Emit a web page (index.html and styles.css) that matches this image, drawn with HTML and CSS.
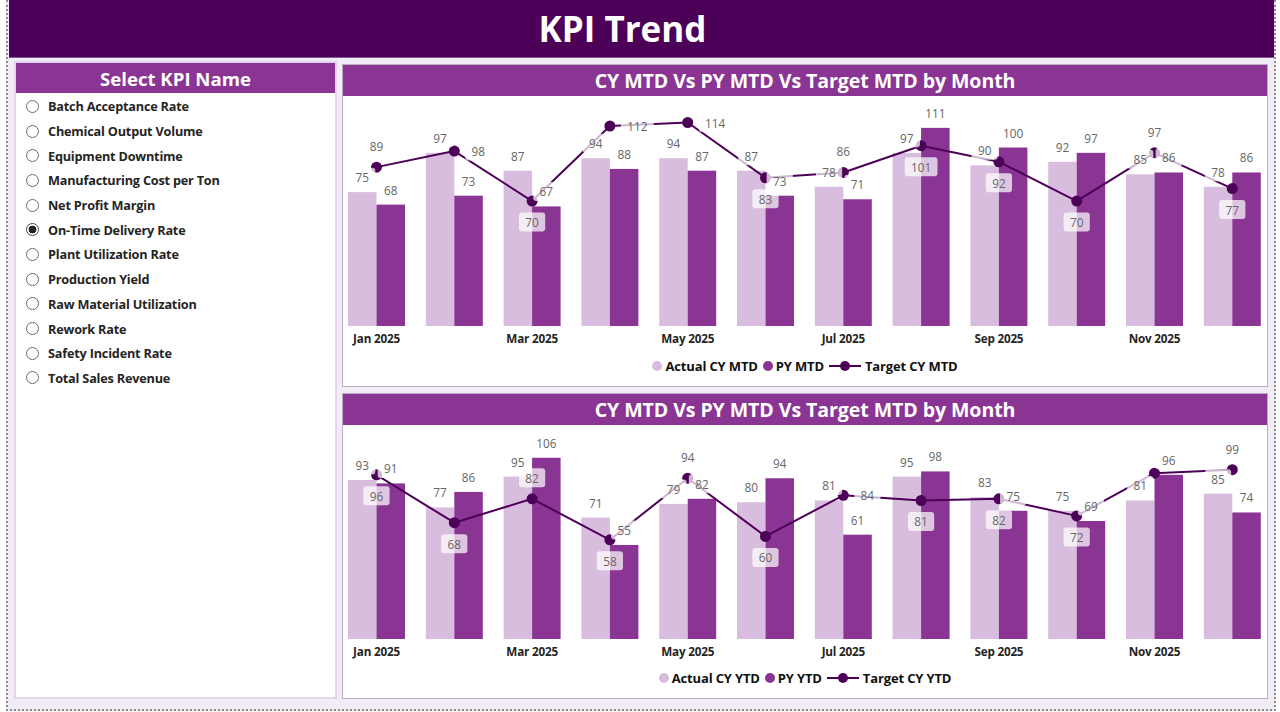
FILE: index.html
```html
<!DOCTYPE html>
<html lang="en">
<head>
<meta charset="utf-8">
<title>KPI Trend</title>
<link rel="stylesheet" href="styles.css">
</head>
<body>
<div class="frame">
  <header class="top"><h1 class="title">KPI Trend</h1></header>
  <div class="content">
    <aside class="panel">
      <div class="panel-head">Select KPI Name</div>
      <ul class="kpi-list">
        <li class="kpi"><span class="radio"></span>Batch Acceptance Rate</li>
        <li class="kpi"><span class="radio"></span>Chemical Output Volume</li>
        <li class="kpi"><span class="radio"></span>Equipment Downtime</li>
        <li class="kpi"><span class="radio"></span>Manufacturing Cost per Ton</li>
        <li class="kpi"><span class="radio"></span>Net Profit Margin</li>
        <li class="kpi"><span class="radio radio-on"></span>On-Time Delivery Rate</li>
        <li class="kpi"><span class="radio"></span>Plant Utilization Rate</li>
        <li class="kpi"><span class="radio"></span>Production Yield</li>
        <li class="kpi"><span class="radio"></span>Raw Material Utilization</li>
        <li class="kpi"><span class="radio"></span>Rework Rate</li>
        <li class="kpi"><span class="radio"></span>Safety Incident Rate</li>
        <li class="kpi"><span class="radio"></span>Total Sales Revenue</li>
      </ul>
    </aside>
    <main class="charts">
      <section class="card card-mtd">
        <div class="card-head">CY MTD Vs PY MTD Vs Target MTD by Month</div>
        <div class="card-body">
          <svg class="plot" data-chart="c1" xmlns="http://www.w3.org/2000/svg"></svg>
          <div class="legend">
            <span class="lg-item"><span class="dot dot-light"></span>Actual CY MTD</span>
            <span class="lg-item"><span class="dot dot-dark"></span>PY MTD</span>
            <span class="lg-item"><svg class="lg-line" width="32" height="12" viewBox="0 0 32 12"><line x1="0" y1="6" x2="32" y2="6" stroke="#4d0057" stroke-width="2"/><circle cx="16" cy="6" r="5" fill="#4d0057"/></svg>Target CY MTD</span>
          </div>
        </div>
      </section>
      <section class="card card-ytd">
        <div class="card-head">CY MTD Vs PY MTD Vs Target MTD by Month</div>
        <div class="card-body">
          <svg class="plot" data-chart="c2" xmlns="http://www.w3.org/2000/svg"></svg>
          <div class="legend">
            <span class="lg-item"><span class="dot dot-light"></span>Actual CY YTD</span>
            <span class="lg-item"><span class="dot dot-dark"></span>PY YTD</span>
            <span class="lg-item"><svg class="lg-line" width="32" height="12" viewBox="0 0 32 12"><line x1="0" y1="6" x2="32" y2="6" stroke="#4d0057" stroke-width="2"/><circle cx="16" cy="6" r="5" fill="#4d0057"/></svg>Target CY YTD</span>
          </div>
        </div>
      </section>
    </main>
  </div>
</div>
<script src="app.js"></script>
</body>
</html>
```

FILE: styles.css
```css
* { box-sizing: border-box; }
html, body { margin: 0; padding: 0; }
body {
  background: #ffffff;
  font-family: "Open Sans", "Noto Sans", sans-serif;
  color: #252423;
}
.frame {
  width: 1270px;
  height: 711px;
  margin-left: 6px;
  border: 2px dotted #8c8c8c;
  border-top: none;
  background: #f2ecf6;
  display: flex;
  flex-direction: column;
}
.top {
  height: 58px;
  margin-left: 1px;
  background: #4d0057;
  border-bottom: 1px solid #7b5d97;
  display: flex;
  align-items: center;
  justify-content: center;
  padding-right: 38px;
}
.title {
  margin: 0;
  color: #ffffff;
  font-size: 35px;
  font-weight: 700;
  line-height: 1;
}
.content {
  flex: 1;
  display: flex;
  gap: 5px;
  padding: 3px 6px 10px 6px;
}
.panel {
  width: 323px;
  background: #ffffff;
  border: 2px solid #e4d3ed;
  display: flex;
  flex-direction: column;
}
.panel-head {
  height: 30px;
  background: #8a3493;
  color: #ffffff;
  font-size: 18.6px;
  font-weight: 700;
  display: flex;
  align-items: center;
  justify-content: center;
}
.kpi-list {
  list-style: none;
  margin: 0;
  padding: 1px 0 0 10px;
}
.kpi {
  height: 24.7px;
  display: flex;
  align-items: center;
  gap: 9px;
  font-size: 12.7px;
  font-weight: 700;
  color: #252423;
  letter-spacing: -0.2px;
}
.radio {
  width: 13px;
  height: 13px;
  border-radius: 50%;
  border: 1px solid #6b6b6b;
  background: #ffffff;
  flex: none;
}
.radio-on {
  border-color: #444444;
  background: radial-gradient(circle, #252423 0 3.6px, #ffffff 4.2px);
}
.charts {
  width: 926px;
  display: flex;
  flex-direction: column;
  gap: 6px;
  padding-top: 3px;
}
.card {
  background: #ffffff;
  border: 1px solid #bcaac7;
  display: flex;
  flex-direction: column;
}
.card-mtd { height: 323px; }
.card-ytd { flex: 1; }
.card-head {
  height: 31px;
  flex: none;
  background: #8a3493;
  color: #ffffff;
  font-size: 19.6px;
  font-weight: 700;
  display: flex;
  align-items: center;
  justify-content: center;
  letter-spacing: -0.1px;
}
.card-body {
  flex: 1;
  display: flex;
  flex-direction: column;
}
.plot {
  flex: 1;
  width: 100%;
  display: block;
}
.legend {
  height: 28px;
  margin-bottom: 6px;
  flex: none;
  display: flex;
  align-items: center;
  justify-content: center;
  gap: 5px;
  font-size: 13px;
  font-weight: 700;
  color: #111111;
  letter-spacing: -0.15px;
}
.lg-item {
  display: flex;
  align-items: center;
  gap: 3px;
}
.dot {
  width: 10px;
  height: 10px;
  border-radius: 50%;
  display: inline-block;
}
.dot-light { background: #d9bddf; }
.dot-dark { background: #8a3493; }
.lg-line { display: block; margin-right: 1px; }

.bar-light { fill: #d9bddf; }
.bar-dark { fill: #8a3493; }
.tline { fill: none; stroke: #4d0057; stroke-width: 2; stroke-linejoin: round; }
.tdot { fill: #4d0057; }
.lbl-bg { fill: #ffffff; opacity: 0.72; }
.lbl {
  font-family: "Open Sans", "Noto Sans", sans-serif;
  font-size: 11.8px;
  fill: #666666;
  text-anchor: middle;
  dominant-baseline: central;
}
.axis {
  font-family: "Open Sans", "Noto Sans", sans-serif;
  font-size: 11.7px;
  font-weight: 700;
  fill: #252423;
  text-anchor: middle;
  dominant-baseline: central;
  letter-spacing: -0.2px;
}
```

FILE: app.js
```js
(function () {
  var NS = 'http://www.w3.org/2000/svg';
  var months = ['Jan 2025', 'Feb 2025', 'Mar 2025', 'Apr 2025', 'May 2025', 'Jun 2025',
    'Jul 2025', 'Aug 2025', 'Sep 2025', 'Oct 2025', 'Nov 2025', 'Dec 2025'];
  var data = {
    c1: {
      base: 326, k: 1.785, axisY: 338,
      light: [75, 97, 87, 94, 94, 87, 78, 97, 90, 92, 85, 78],
      dark: [68, 73, 67, 88, 87, 73, 71, 111, 100, 97, 86, 86],
      target: [89, 98, 70, 112, 114, 83, 86, 101, 92, 70, 97, 77],
      pos: ['a', 'r', 'b', 'r', 'r', 'b', 'a', 'b', 'b', 'b', 'a', 'b']
    },
    c2: {
      base: 639, k: 1.71, axisY: 651,
      light: [93, 77, 95, 71, 79, 80, 81, 95, 83, 75, 81, 85],
      dark: [91, 86, 106, 55, 82, 94, 61, 98, 75, 69, 96, 74],
      target: [96, 68, 82, 58, 94, 60, 84, 81, 82, 72, 97, 99],
      pos: ['b', 'b', 'a', 'b', 'a', 'b', 'r', 'b', 'b', 'b', 'n', 'a']
    }
  };
  function el(tag, attrs, parent) {
    var e = document.createElementNS(NS, tag);
    for (var k in attrs) e.setAttribute(k, attrs[k]);
    parent.appendChild(e);
    return e;
  }
  function label(g, x, y, txt) {
    var w = txt.length * 6.6 + 13;
    el('rect', { x: x - w / 2, y: y - 9.5, width: w, height: 19, rx: 3, 'class': 'lbl-bg' }, g);
    var t = el('text', { x: x, y: y, 'class': 'lbl' }, g);
    t.textContent = txt;
  }
  var svgs = document.querySelectorAll('svg.plot');
  for (var s = 0; s < svgs.length; s++) {
    var svg = svgs[s];
    var d = data[svg.getAttribute('data-chart')];
    var r = svg.getBoundingClientRect();
    svg.setAttribute('viewBox', r.left + ' ' + r.top + ' ' + r.width + ' ' + r.height);
    var X0 = 348, P = 77.8, BW = 28.5;
    var yv = (function (dd) { return function (v) { return dd.base - v * dd.k; }; })(d);
    var gBars = el('g', {}, svg);
    var gLine = el('g', {}, svg);
    var gLbl = el('g', {}, svg);
    var pts = [];
    for (var i = 0; i < 12; i++) {
      var lx = X0 + i * P;
      var cx = lx + BW;
      var yl = yv(d.light[i]), yd = yv(d.dark[i]);
      el('rect', { x: lx, y: yl, width: BW, height: d.base - yl, 'class': 'bar-light' }, gBars);
      el('rect', { x: cx, y: yd, width: BW, height: d.base - yd, 'class': 'bar-dark' }, gBars);
      pts.push([cx, yv(d.target[i])]);
      if (i % 2 === 0) {
        var t = el('text', { x: cx, y: d.axisY, 'class': 'axis' }, gBars);
        t.textContent = months[i];
      }
    }
    el('polyline', { points: pts.map(function (p) { return p[0] + ',' + p[1]; }).join(' '), 'class': 'tline' }, gLine);
    for (var j = 0; j < 12; j++) {
      el('circle', { cx: pts[j][0], cy: pts[j][1], r: 5.5, 'class': 'tdot' }, gLine);
    }
    for (var m = 0; m < 12; m++) {
      var lx2 = X0 + m * P;
      label(gLbl, lx2 + BW / 2, yv(d.light[m]) - 15, String(d.light[m]));
      label(gLbl, lx2 + BW * 1.5, yv(d.dark[m]) - 15, String(d.dark[m]));
      var tv = String(d.target[m]);
      var px = pts[m][0], py = pts[m][1];
      var p = d.pos[m];
      if (p === 'a') label(gLbl, px, py - 21, tv);
      else if (p === 'b') label(gLbl, px, py + 21, tv);
      else if (p === 'r') label(gLbl, px + 17 + 3.5 * tv.length, py, tv);
    }
  }
})();
```
